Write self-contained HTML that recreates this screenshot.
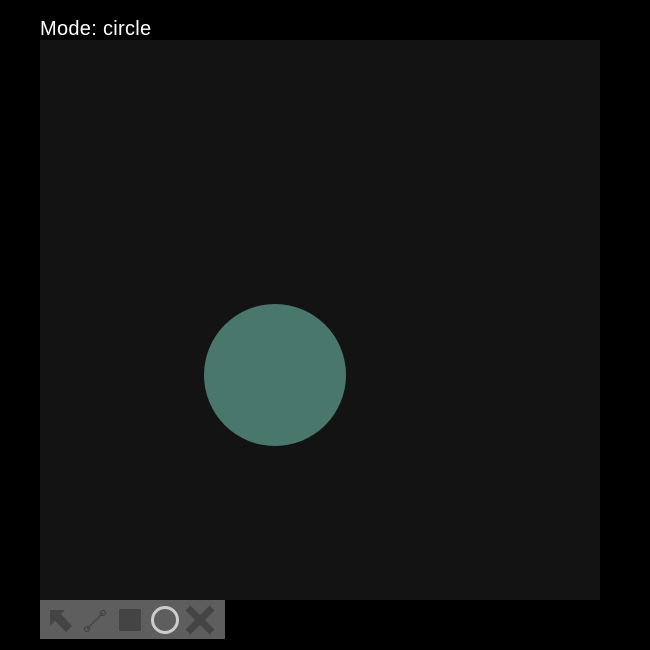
<!DOCTYPE html>
<html><head><style>
html,body{margin:0;padding:0;background:#000;width:650px;height:650px;overflow:hidden}
.t{position:absolute;left:40px;top:18px;color:#fff;font:20px "Liberation Sans",sans-serif;letter-spacing:0.3px;line-height:23px}
.c{position:absolute;left:40px;top:40px;width:560px;height:560px;background:#131313}
.b{position:absolute;left:40px;top:600px;width:185px;height:39px;background:#5e5e5e}
</style></head><body>
<div class="t">Mode: circle</div>
<div class="c"></div>
<svg style="position:absolute;left:0;top:0" width="650" height="650">
<circle cx="275" cy="375" r="71" fill="#4a776c"/>
</svg>
<div class="b"></div>
<svg style="position:absolute;left:0;top:0" width="650" height="650">
<polygon points="50,610 65,610 61,614 72,626 66,632 55,621 50,626" fill="#444"/>
<line x1="87" y1="629" x2="103" y2="613" stroke="#444" stroke-width="1.5"/>
<circle cx="87" cy="629" r="2.5" fill="none" stroke="#444" stroke-width="1.2"/>
<circle cx="103" cy="613" r="2.5" fill="none" stroke="#444" stroke-width="1.2"/>
<rect x="119" y="609" width="22" height="22" fill="#444"/>
<circle cx="165" cy="620" r="12.5" fill="none" stroke="#ccc" stroke-width="3"/>
<path d="M188 608 L212 632 M212 608 L188 632" stroke="#444" stroke-width="7"/>
</svg>
</body></html>
